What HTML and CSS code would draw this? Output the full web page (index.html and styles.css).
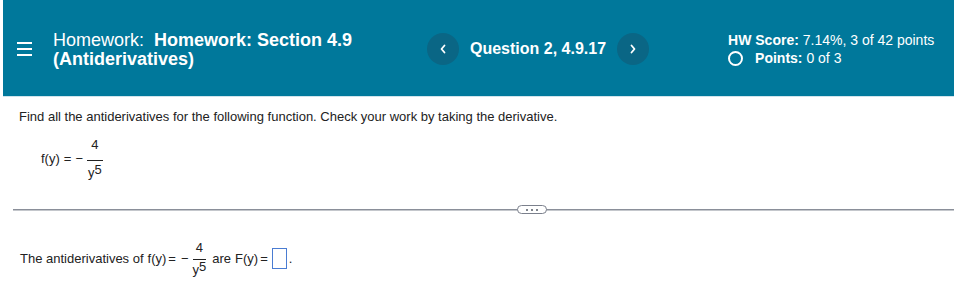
FILE: index.html
```html
<!DOCTYPE html>
<html lang="en">
<head>
<meta charset="utf-8">
<title>Homework: Section 4.9</title>
<link rel="stylesheet" href="styles.css">
</head>
<body>
<header class="topbar">
  <div class="brand">
    <div class="menu" aria-label="Menu"><span></span><span></span><span></span></div>
    <div class="title"><span>Homework:</span>&nbsp; <b>Homework: Section 4.9</b> <b>(Antiderivatives)</b></div>
  </div>
  <nav class="qnav">
    <span class="nav-btn"><svg width="8" height="10" viewBox="0 0 8 10"><path d="M5.5 1.5 L2.5 5 L5.5 8.5" fill="none" stroke="#fff" stroke-width="1.8" stroke-linecap="round" stroke-linejoin="round"/></svg></span>
    <span class="qlabel">Question 2, 4.9.17</span>
    <span class="nav-btn"><svg width="8" height="10" viewBox="0 0 8 10"><path d="M2.5 1.5 L5.5 5 L2.5 8.5" fill="none" stroke="#fff" stroke-width="1.8" stroke-linecap="round" stroke-linejoin="round"/></svg></span>
  </nav>
  <div class="score">
    <div><b>HW Score:</b> 7.14%, 3 of 42 points</div>
    <div class="points"><span class="ring"></span><b>Points:</b>&nbsp;0 of 3</div>
  </div>
</header>
<main class="content">
  <p class="prompt">Find all the antiderivatives for the following function. Check your work by taking the derivative.</p>
  <div class="formula">
    <span class="fy">f(y)</span><span class="eq">=</span>
    <span class="minus">&minus;</span>
    <span class="frac frac-lg"><span class="num">4</span><span class="den">y<sup>5</sup></span></span>
  </div>
  <div class="divider"><span class="more"><i></i><i></i><i></i></span></div>
  <div class="answer">
    <span>The antiderivatives of</span><span class="fy sp">f(y)</span><span class="eq">=</span>
    <span class="minus">&minus;</span>
    <span class="frac"><span class="num">4</span><span class="den">y<sup>5</sup></span></span>
    <span class="are">are</span><span class="fy sp">F(y)</span><span class="eq">=</span>
    <span class="box"></span><span>.</span>
  </div>
</main>
</body>
</html>
```
FILE: styles.css
```css
html, body { margin: 0; padding: 0; background: #fff; }
body {
  font-family: "Liberation Sans", Arial, sans-serif;
  color: #222;
  padding-left: 3px;
}
.topbar {
  height: 94px;
  padding-top: 2px;
  border-bottom: 1px solid #cfe4ec;
  background: #00789b;
  color: #fff;
  display: flex;
  align-items: center;
}
.brand {
  width: 424px;
  display: flex;
  align-items: center;
}
.menu {
  margin-left: 14px;
  width: 15px;
  display: flex;
  flex-direction: column;
  gap: 4px;
}
.menu span { height: 2px; background: #fff; }
.title {
  margin-left: 21px;
  margin-top: 1px;
  width: 340px;
  font-size: 18px;
  line-height: 19px;
}
.qnav {
  display: flex;
  align-items: center;
  gap: 11px;
}
.nav-btn {
  width: 32px;
  height: 32px;
  border-radius: 50%;
  background: #0a6685;
  display: flex;
  align-items: center;
  justify-content: center;
}
.qlabel { font-weight: bold; font-size: 16px; }
.score {
  margin-left: 79px;
  font-size: 14px;
  line-height: 18px;
}
.points { display: flex; align-items: center; }
.ring {
  width: 11px;
  height: 11px;
  border: 2px solid #fff;
  border-radius: 50%;
  margin-right: 12px;
}
.content { padding: 11.5px 0 0 10px; font-size: 13px; line-height: 15px; }
.prompt { margin: 0 0 0 6px; }
.formula {
  margin: 13px 0 0 28px;
  display: flex;
  align-items: center;
}
.formula .eq { margin-left: 4px; }
.formula .minus { margin: 0 4px 0 4px; }
.sp { margin-left: 4px; }
.eq { margin-left: 2px; }
.minus { margin: 0 4px 0 5px; }
.frac {
  display: inline-flex;
  flex-direction: column;
  align-items: center;
}
.frac .num { padding-bottom: 4px; }
.frac .den {
  border-top: 1px solid #222;
  padding-top: 2px;
}
.frac-lg .num { padding-bottom: 8px; }
.frac-lg .den { padding: 4px 1px 0; }
.frac sup { font-size: 13px; line-height: 0; vertical-align: 3px; }
.divider {
  margin-top: 25px;
  height: 10px;
  display: flex;
  align-items: center;
  justify-content: center;
  background: linear-gradient(#8a8f99, #8a8f99) 0 4px / 100% 1.5px no-repeat;
  padding-left: 96px;
}
.more {
  width: 28px;
  height: 7px;
  border: 1.5px solid #7b808c;
  border-radius: 6px;
  background: #fff;
  display: flex;
  align-items: center;
  justify-content: center;
  gap: 3px;
}
.more i { width: 2px; height: 2px; background: #555b66; border-radius: 1px; }
.answer {
  margin: 25.5px 0 0 7px;
  display: flex;
  align-items: center;
}
.are { margin-left: 6px; }
.box {
  width: 13px;
  height: 19px;
  border: 1px solid #4a7cd2;
  margin-left: 4px;
  margin-right: 2px;
}
```
